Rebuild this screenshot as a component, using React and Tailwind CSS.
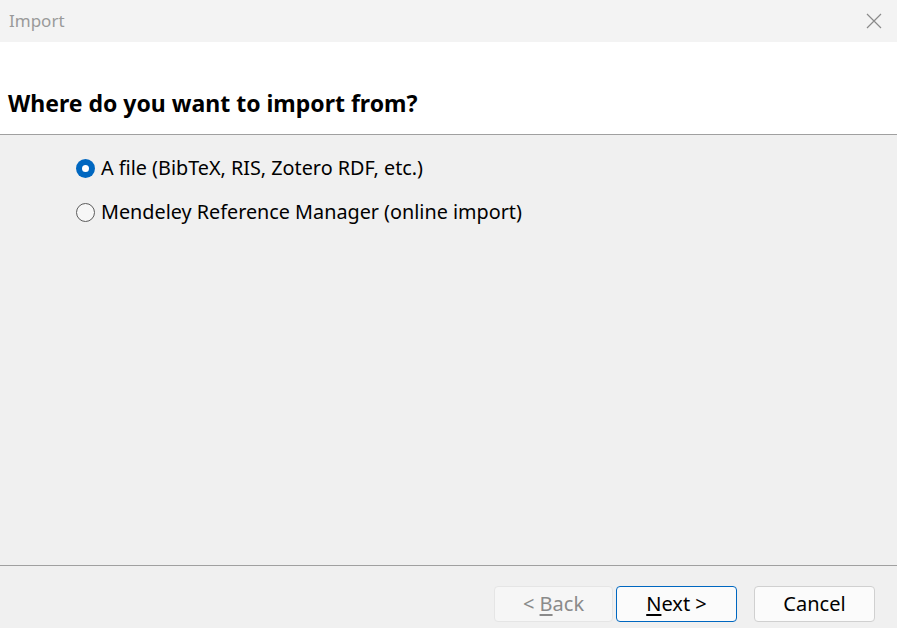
import React from 'react';

const font = { fontFamily: '"Noto Sans", "Open Sans", sans-serif' };

const Radio = ({ checked, label }) => (
    <label className="flex items-center h-[24px]">
        {checked ? (
            <span className="w-[19px] h-[19px] rounded-full bg-[#0067c0] flex items-center justify-center shrink-0">
                <span className="w-[7px] h-[7px] rounded-full bg-white" />
            </span>
        ) : (
            <span className="w-[19px] h-[19px] rounded-full border border-[#5c5c5c] bg-[#f7f7f7] shrink-0" />
        )}
        <span className="ml-[6px] text-[19.8px] text-black leading-none">{label}</span>
    </label>
);

export default function App() {
    return (
        <div className="w-[897px] h-[628px] flex flex-col bg-[#f0f0f0] overflow-hidden" style={font}>
            {/* Title bar */}
            <div className="h-[42px] bg-[#f3f3f3] flex items-center justify-between pl-[9px] pr-[15px]">
                <span className="text-[17px] text-[#9a9a9a]">Import</span>
                <svg width="16" height="16" viewBox="0 0 16 16" className="text-[#8a8a8a]">
                    <path d="M1 1 L15 15 M15 1 L1 15" stroke="currentColor" strokeWidth="1.2" fill="none" />
                </svg>
            </div>

            {/* Header */}
            <div className="h-[93px] bg-white flex items-end pl-[8px] pb-[19px] border-b border-[#a0a0a0]">
                <h1 className="text-[23px] font-bold text-black leading-none">Where do you want to import from?</h1>
            </div>

            {/* Content */}
            <div className="flex-1 flex flex-col gap-[20px] pl-[76px] pt-[21px] border-b border-[#a0a0a0]">
                <Radio checked label="A file (BibTeX, RIS, Zotero RDF, etc.)" />
                <Radio label="Mendeley Reference Manager (online import)" />
            </div>

            {/* Footer */}
            <div className="h-[62px] flex items-start pt-[20px] pl-[494px]">
                <button className="w-[119px] h-[36px] rounded-[4px] border border-[#e5e5e5] bg-[#f6f6f6] text-[20px] text-[#8a8a8a]">
                    &lt; <span className="underline underline-offset-[3px]">B</span>ack
                </button>
                <button className="ml-[3px] w-[121px] h-[36px] rounded-[4px] border border-[#0067c0] bg-[#fbfbfb] text-[20px] text-black">
                    <span className="underline underline-offset-[3px]">N</span>ext &gt;
                </button>
                <button className="ml-[17px] w-[121px] h-[36px] rounded-[4px] border border-[#d0d0d0] bg-[#fbfbfb] text-[20px] text-black">
                    Cancel
                </button>
            </div>
        </div>
    );
}
